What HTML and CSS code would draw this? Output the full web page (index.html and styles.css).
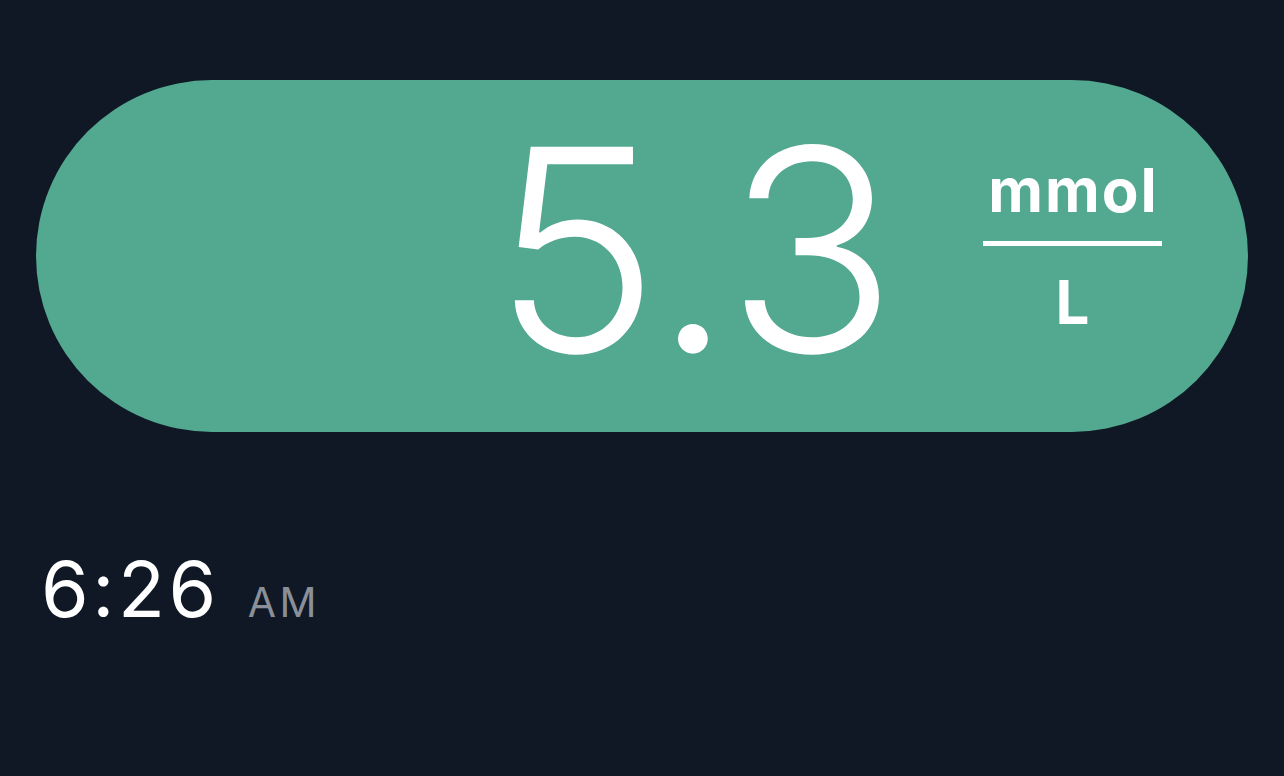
FILE: index.html
```html
<!DOCTYPE html>
<html lang="en">
<head>
<meta charset="utf-8">
<title>Glucose</title>
<link rel="stylesheet" href="styles.css">
</head>
<body>
<main class="screen">
  <section class="reading">
    <div class="value">5.3</div>
    <div class="unit">
      <span class="unit-top">mmol</span>
      <span class="unit-bar"></span>
      <span class="unit-bottom">L</span>
    </div>
  </section>
  <div class="time">
    <span class="clock">6:26</span>
    <span class="ampm">AM</span>
  </div>
</main>
</body>
</html>
```

FILE: styles.css
```css
html, body {
  margin: 0;
  padding: 0;
  background: #0f1824;
}
.screen {
  width: 1284px;
  height: 776px;
  padding: 80px 0 0 36px;
  box-sizing: border-box;
  font-family: Inter, Lato, sans-serif;
  color: #ffffff;
}
.reading {
  width: 1212px;
  height: 352px;
  border-radius: 176px;
  background: #53a890;
  display: flex;
  align-items: center;
  justify-content: flex-end;
  padding-right: 86px;
  box-sizing: border-box;
  gap: 86px;
}
.value {
  font-size: 282px;
  font-weight: 300;
  line-height: 1;
  letter-spacing: 1px;
  margin-top: -12px;
  margin-right: -1px;
}
.unit {
  display: flex;
  flex-direction: column;
  align-items: center;
  width: 179px;
  margin-top: -20px;
}
.unit-top, .unit-bottom {
  font-size: 60px;
  font-weight: 700;
  line-height: 1;
}
.unit-top {
  letter-spacing: 2px;
  margin-right: -2px;
}
.unit-bar {
  width: 179px;
  height: 5px;
  background: #ffffff;
  margin: 21px 0 26px;
}
.time {
  margin-top: 119px;
  margin-left: 5px;
  display: flex;
  align-items: baseline;
  gap: 28px;
}
.clock {
  font-size: 77px;
  font-weight: 400;
  line-height: 1;
  letter-spacing: 3.5px;
}
.ampm {
  font-size: 41px;
  font-weight: 400;
  color: #8a9099;
  line-height: 1;
  letter-spacing: 3.5px;
}
```
